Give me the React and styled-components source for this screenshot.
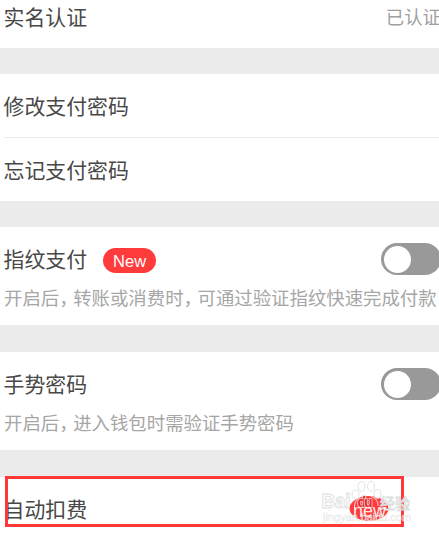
import React, { useState } from 'react';
import styled, { createGlobalStyle } from 'styled-components';

const GlobalStyle = createGlobalStyle`
    body{
        margin: 0;
        background-color: #fff;
        overflow: hidden;
    }
`;

const Page = styled.div`
    width: 439px;
    height: 535px;
    overflow: hidden;
    background-color: #ebebeb;
    font-family: "Noto Sans CJK SC", sans-serif;
    color: #484848;
`;

const Section = styled.section`
    box-sizing: border-box;
    height: ${props => props.$height}px;
    margin-bottom: ${props => props.$gap || 26}px;
    background-color: #fff;
`;

const Row = styled.div`
    box-sizing: border-box;
    display: flex;
    align-items: center;
    height: ${props => props.$height}px;
    padding: ${props => props.$top || 0}px 0 0 4px;
`;

const Divider = styled.div`
    height: 1px;
    margin-left: 4px;
    background-color: #ececec;
`;

const Title = styled.span`
    font-size: 20.9px;
    line-height: 30px;
    margin: -2px 0 0 -0.5px;
    white-space: nowrap;
`;

const Status = styled.span`
    margin: -2px -2px 0 auto;
    font-size: 18.4px;
    line-height: 28px;
    color: #a0a0a0;
    white-space: nowrap;
`;

const Badge = styled.span`
    display: flex;
    align-items: center;
    justify-content: center;
    box-sizing: border-box;
    width: 53px;
    height: 25px;
    margin: 3px 0 0 16px;
    padding-top: 1px;
    border-radius: 13px;
    background-color: #ff3b3b;
    color: #fff;
    font-family: "Liberation Sans", sans-serif;
    font-size: 16.5px;
`;

const Switch = styled.button`
    flex: none;
    display: flex;
    align-items: center;
    justify-content: ${props => (props.$on ? 'flex-end' : 'flex-start')};
    box-sizing: border-box;
    width: 60px;
    height: 32px;
    margin: 0 -2px 0 auto;
    padding: 0 3px;
    border: none;
    border-radius: 16px;
    background-color: ${props => (props.$on ? '#ff3b3b' : '#999')};
`;

const Knob = styled.span`
    width: 27px;
    height: 27px;
    border-radius: 50%;
    background-color: #fff;
`;

const Hint = styled.p`
    margin: -1px 0 0;
    padding-left: 4px;
    font-size: 18.4px;
    line-height: 28px;
    color: #a6a6a6;
    white-space: nowrap;
`;

/* half-width comma with a little air after it */
const Comma = styled.span`
    margin-right: 4.8px;
    font-feature-settings: "halt";
`;

const LastSection = styled.section`
    position: relative;
    height: 58px;
    background-color: #fff;
`;

const Highlight = styled.div`
    position: absolute;
    top: -1px;
    left: 5px;
    box-sizing: border-box;
    width: 399px;
    height: 51px;
    border: 3px solid #ff3939;
`;

const Watermark = styled.svg`
    position: absolute;
    top: 1px;
    left: 318px;
    width: 100px;
    height: 50px;
    font-family: "Liberation Sans", "Noto Sans CJK SC", sans-serif;

    .outline{
        fill: #fff;
        fill-opacity: .75;
        stroke: #dedede;
        stroke-width: .9px;
    }
`;

const Toggle = () => {
    const [on, setOn] = useState(false);
    return (
        <Switch $on={on} onClick={() => setOn(!on)} aria-label="toggle">
            <Knob />
        </Switch>
    );
};

const App = () => {
    return (
        <Page>
            <GlobalStyle />
            <Section $height={48}>
                <Row $height={33}>
                    <Title>实名认证</Title>
                    <Status>已认证</Status>
                </Row>
            </Section>
            <Section $height={127}>
                <Row $height={63} $top={1}>
                    <Title>修改支付密码</Title>
                </Row>
                <Divider />
                <Row $height={63} $top={1}>
                    <Title>忘记支付密码</Title>
                </Row>
            </Section>
            <Section $height={98} $gap={27}>
                <Row $height={57} $top={7}>
                    <Title>指纹支付</Title>
                    <Badge>New</Badge>
                    <Toggle />
                </Row>
                <Hint>开启后<Comma>，</Comma>转账或消费时<Comma>，</Comma>可通过验证指纹快速完成付款</Hint>
            </Section>
            <Section $height={98} $gap={27}>
                <Row $height={57} $top={7}>
                    <Title>手势密码</Title>
                    <Toggle />
                </Row>
                <Hint>开启后<Comma>，</Comma>进入钱包时需验证手势密码</Hint>
            </Section>
            <LastSection>
                <Row $height={58} $top={6}>
                    <Title>自动扣费</Title>
                </Row>
                <Highlight />
                <Watermark viewBox="318 478 100 50">
                    <ellipse cx="369" cy="508.500" rx="19.500" ry="12.500" fill="#ff3b3b" />
                    <g className="outline">
                        <ellipse cx="355.500" cy="494.500" rx="3.500" ry="4.500" />
                        <ellipse cx="361.500" cy="486.500" rx="3.500" ry="5" />
                        <ellipse cx="371" cy="486.500" rx="3.500" ry="5" />
                        <ellipse cx="377.500" cy="494" rx="3.500" ry="4.500" />
                    </g>
                    <path d="M355 510C353 504 357 495 366 495C373 495 379 501 378 506" fill="none" stroke="#fff" strokeWidth="1" opacity="0.8" />
                    <text className="outline" x="321.500" y="508" fontSize="19.500" fontWeight="bold" textLength="29" lengthAdjust="spacingAndGlyphs">Bai</text>
                    <text x="357.500" y="506.500" fontSize="14" fontWeight="bold" fill="#e02d32" stroke="#ffd0d0" strokeWidth="1.600" paintOrder="stroke" textLength="15">du</text>
                    <text className="outline" x="380" y="508.500" fontSize="15" textLength="30">经验</text>
                    <text x="353" y="517" fontSize="18.500" fill="#fff" fillOpacity="0.9" textLength="33" lengthAdjust="spacingAndGlyphs">new</text>
                    <text x="323" y="520.500" fontSize="10.500" fill="#fff" fillOpacity="0.6" stroke="#e2e2e2" strokeOpacity="0.8" strokeWidth="0.500" textLength="88" lengthAdjust="spacingAndGlyphs">jingyan.baidu.com</text>
                </Watermark>
            </LastSection>
        </Page>
    );
};

export default App;
